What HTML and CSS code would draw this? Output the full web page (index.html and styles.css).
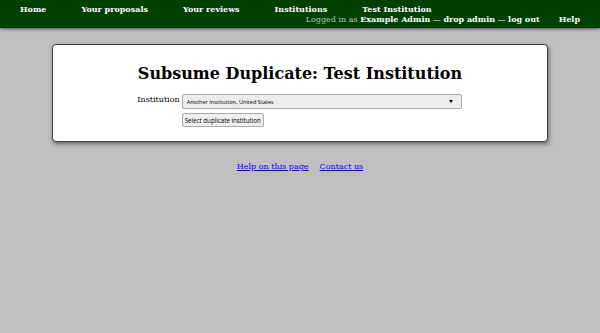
FILE: index.html
```html
<!DOCTYPE html>
<html>
<head>
<meta charset="utf-8">
<link rel="stylesheet" href="styles.css">
</head>
<body>
<nav class="topnav">
  <div class="row row-top">
    <a class="nav-item" href="#">Home</a>
    <a class="nav-item" href="#">Your proposals</a>
    <a class="nav-item" href="#">Your reviews</a>
    <a class="nav-item" href="#">Institutions</a>
    <a class="nav-item" href="#">Test Institution</a>
  </div>
  <div class="row row-bottom">
    <span class="user"><span class="muted">Logged in as</span> <b>Example Admin</b> — <b>drop admin</b> — <b>log out</b></span>
    <a class="nav-item help" href="#">Help</a>
  </div>
</nav>
<main class="page">
  <section class="card">
    <h1 class="title">Subsume Duplicate: Test Institution</h1>
    <form class="form">
      <div class="field">
        <label class="label">Institution</label>
        <div class="controls">
          <div class="select"><span>Another Institution, United States</span><span class="caret"></span></div>
          <button type="button" class="btn">Select duplicate institution</button>
        </div>
      </div>
    </form>
  </section>
  <footer class="footer">
    <a href="#">Help on this page</a>
    <a href="#">Contact us</a>
  </footer>
</main>
</body>
</html>
```
FILE: styles.css
```css
html, body { margin: 0; padding: 0; }
body {
  background: #c0c0c0;
  font-family: "DejaVu Serif", serif;
  width: 600px;
  height: 333px;
  overflow: hidden;
}
.topnav {
  background: #004000;
  height: 28px;
  box-shadow: 0 1px 3px rgba(0,0,0,0.6);
  padding: 4px 20px 0 20px;
  box-sizing: border-box;
  font-size: 8px;
  line-height: 10px;
  color: #fff;
}
.row { display: flex; }
.row-top { gap: 35px; }
.row-bottom { justify-content: flex-end; gap: 19px; }
.nav-item { color: #fff; text-decoration: none; font-weight: bold; }
.user { color: #fff; }
.muted { color: #b8c4b8; font-weight: normal; }
.page { padding-top: 16px; }
.card {
  margin: 0 52px;
  height: 98px;
  box-sizing: border-box;
  background: #fff;
  border: 1px solid #444;
  border-radius: 4px;
  box-shadow: 1px 2px 4px rgba(0,0,0,0.5);
  padding: 19px 0 0;
}
.title {
  margin: 0;
  text-align: center;
  font-size: 16px;
  line-height: 20px;
  font-weight: bold;
}
.form { margin-top: 10px; }
.field { display: flex; justify-content: center; gap: 2px; margin-left: -1px; }
.label { font-size: 8px; line-height: 11px; }
.controls { display: flex; flex-direction: column; align-items: flex-start; gap: 4px; }
.select {
  width: 280px;
  height: 15px;
  box-sizing: border-box;
  border: 1px solid #aaa;
  border-radius: 2px;
  background: #ececec;
  font-family: "Open Sans", sans-serif;
  font-size: 5.6px;
  display: flex;
  align-items: center;
  justify-content: space-between;
  padding: 0 8px 0 4px;
}
.caret {
  width: 0; height: 0;
  border-left: 2.5px solid transparent;
  border-right: 2.5px solid transparent;
  border-top: 3px solid #000;
}
.btn {
  font-family: "Open Sans", sans-serif;
  font-size: 6.2px;
  height: 14px;
  padding: 0 2px;
  border: 1px solid #aaa;
  border-radius: 2px;
  background: #efefef;
  color: #000;
}
.footer {
  display: flex;
  justify-content: center;
  gap: 11px;
  margin-top: 20px;
  font-size: 8px;
}
.footer a { color: #0000ee; }
```
